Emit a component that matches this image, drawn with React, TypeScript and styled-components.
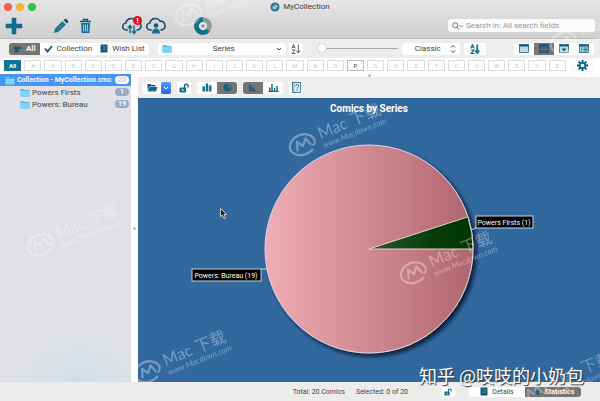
import React, { useState } from "react";
import styled, { createGlobalStyle, css } from "styled-components";

const teal = "#12708f";
const navy = "#17557a";

const GlobalStyle = createGlobalStyle`
  * { box-sizing: border-box; }
  body { margin: 0; background: #ececec; }
  body, button, input, select {
    font-family: Roboto, "Noto Sans CJK SC", sans-serif;
    font-size: 8px;
    color: #444;
  }
  button, select, input { margin: 0; padding: 0; border: 0; background: none; }
`;

const Window = styled.div`
  position: relative;
  display: flex;
  flex-direction: column;
  min-height: 100vh;
  overflow: hidden;
  background: #fff;
`;

const Header = styled.header`
  background: linear-gradient(#e6e6e6, #cfcfcf);
  border-bottom: 1px solid #bcbcbc;
`;

const TitleBar = styled.div`
  display: grid;
  grid-template-columns: 1fr auto 1fr;
  align-items: center;
  height: 13px;
  padding: 0 4px;
`;

const Lights = styled.div`
  display: flex;
  gap: 4px;
`;

const Light = styled.button<{ $color: string }>`
  width: 8px;
  height: 8px;
  border-radius: 50%;
  background: ${(p) => p.$color};
`;

const Title = styled.h1`
  display: flex;
  align-items: center;
  gap: 3px;
  margin: 0;
  font-size: 8px;
  font-weight: 400;
  color: #3c3c3c;
`;

const MainTools = styled.div`
  display: flex;
  align-items: center;
  height: 25px;
  padding: 0 5px 0 4px;
`;

const ToolGroup = styled.div`
  display: flex;
  align-items: center;
  gap: 4px;
  margin-right: 27px;
`;

const ToolButton = styled.button`
  display: grid;
  place-items: center;
  width: 20px;
  height: 22px;
`;

const SearchBox = styled.label`
  display: flex;
  align-items: center;
  gap: 3px;
  flex: 0 1 147px;
  height: 13px;
  margin-left: auto;
  padding: 0 4px;
  border-radius: 3px;
  background: #fafafa;
`;

const SearchInput = styled.input`
  flex: 1;
  min-width: 0;
  outline: none;
  &::placeholder { color: #999; opacity: 1; }
`;

const Bar = styled.div`
  display: flex;
  align-items: center;
  height: 19px;
  padding: 0 6px 0 9px;
  background: #ededed;
`;

const Segments = styled.div`
  display: flex;
  border-radius: 3px;
  overflow: hidden;
  background: #fff;
`;

const Segment = styled.button<{ $on?: boolean; $wide?: boolean }>`
  display: flex;
  align-items: center;
  justify-content: center;
  gap: 4px;
  min-width: 20px;
  height: 12px;
  padding: 0 ${(p) => (p.$wide ? "4px" : "0")};
  white-space: nowrap;
  ${(p) =>
    p.$on &&
    css`
      background: #757575;
      color: #fff;
      font-weight: 600;
    `}
`;

const Chip = styled.button`
  display: grid;
  place-items: center;
  min-width: 14px;
  height: 12px;
  border-radius: 2px;
  background: #fff;
`;

const WideChip = styled(Chip)`
  width: 22px;
`;

const Picker = styled.label`
  display: flex;
  align-items: center;
  flex: 0 1 128px;
  height: 12px;
  margin: 0 3px 0 9px;
  padding: 0 4px;
  border-radius: 3px;
  background: #fff;
`;

const StylePicker = styled(Picker)`
  flex-basis: 58px;
  margin: 0 4px;
`;

const Select = styled.select`
  flex: 1;
  min-width: 0;
  appearance: none;
  text-align: center;
  text-align-last: center;
  outline: none;
`;

const Slider = styled.input`
  flex: 0 1 80px;
  min-width: 0;
  height: 12px;
  margin-left: 15px;
  appearance: none;
  &::-webkit-slider-runnable-track { height: 1px; background: #a9a9a9; }
  &::-webkit-slider-thumb {
    appearance: none;
    width: 8px;
    height: 8px;
    margin-top: -4px;
    border-radius: 50%;
    background: #fff;
    box-shadow: 0 0 1px #777;
  }
`;

const Spacer = styled.div`
  flex: 1;
`;

const LetterBar = styled.div`
  display: flex;
  align-items: center;
  gap: 3px;
  height: 14px;
  padding: 0 7px 0 4px;
`;

const Letter = styled.button<{ $state: "on" | "has" | "empty" }>`
  flex: 1 1 0;
  height: 11px;
  border: 1px solid #dcdcdc;
  font-size: 6px;
  line-height: 9px;
  color: #c9c9c9;
  ${(p) => p.$state === "has" && css`color: #444; border-color: #bbb;`}
  ${(p) => p.$state === "on" && css`background: #0f7698; border-color: #0f7698; color: #fff; font-weight: 700;`}
`;

const Gear = styled(Chip)`
  width: 20px;
  margin-left: 4px;
  box-shadow: 0 0 1px #bbb;
`;

const Body = styled.div`
  display: flex;
  flex: 1;
  margin-top: 2px;
`;

const Sidebar = styled.nav`
  flex: 0 0 131px;
  min-width: 0;
  background: radial-gradient(ellipse 60px 40px at 60% 100%, #d0dfe9, transparent), #dfe1e5;
`;

const Handle = styled.div`
  display: grid;
  place-items: center;
  flex: 0 0 7px;
  &::after { content: ""; width: 3px; height: 3px; border-radius: 50%; background: #bbb; }
`;

const TopHandle = styled(Handle)`
  flex-basis: 3px;
`;

const List = styled.ul`
  margin: 0;
  padding: 0;
  list-style: none;
`;

const Row = styled.button<{ $root?: boolean }>`
  display: flex;
  align-items: center;
  gap: 2px;
  width: 100%;
  height: 12px;
  padding: 0 2px 0 ${(p) => (p.$root ? "5px" : "20px")};
  ${(p) =>
    p.$root &&
    css`
      background: #4a94f2;
      color: #fff;
      font-size: 7px;
      font-weight: 600;
    `}
`;

const RowLabel = styled.span`
  flex: 1;
  min-width: 0;
  white-space: nowrap;
  text-align: left;
`;

const Count = styled.span<{ $root?: boolean }>`
  flex: 0 0 14px;
  height: 8px;
  border-radius: 4px;
  font-size: 7px;
  line-height: 8px;
  font-weight: 600;
  text-align: center;
  background: ${(p) => (p.$root ? "#fff" : "#9aa9c6")};
  color: ${(p) => (p.$root ? "#b9cdea" : "#fff")};
`;

const Content = styled.main`
  display: flex;
  flex-direction: column;
  flex: 1;
  min-width: 0;
`;

const ChartTools = styled(Bar)`
  gap: 6px;
  height: 21px;
  padding: 0 5px;
`;

const Pair = styled.div`
  display: flex;
`;

const FolderChip = styled(Chip)`
  width: 18px;
`;

const MoreChip = styled(Chip)`
  min-width: 10px;
  background: linear-gradient(#5a9cf8, #1f66e8);
`;

const ChartArea = styled.section`
  flex: 1;
  display: flex;
  background: #31699f;
  border-top: 1px solid #2b6097;
`;

const ChartSvg = styled.svg`
  display: block;
  width: 100%;
  flex: 1;
  min-height: 283px;
`;

const Footer = styled.footer`
  display: flex;
  align-items: center;
  justify-content: flex-end;
  height: 19px;
  padding-right: 19px;
  background: #ececec;
  font-size: 7px;
`;

const Status = styled.span`
  margin-right: 11px;
`;

const LockChip = styled(Chip)`
  height: 10px;
  margin: 0 14px 0 22px;
`;

const Tab = styled(Segment)`
  width: 56px;
  height: 10px;
  font-size: 7px;
`;

const Overlay = styled.div`
  position: absolute;
  inset: 0;
  overflow: hidden;
  pointer-events: none;
`;

const Mark = styled.div<{ $x: number; $y: number; $alpha: number }>`
  position: absolute;
  left: ${(p) => p.$x}px;
  top: ${(p) => p.$y}px;
  display: flex;
  align-items: center;
  gap: 4px;
  color: #fff;
  opacity: ${(p) => p.$alpha};
  transform: rotate(-22deg);
  transform-origin: 15px 15px;
`;

const MarkText = styled.div`
  font-family: Lato, "Noto Sans CJK SC", sans-serif;
  font-size: 16px;
  line-height: 18px;
  white-space: nowrap;
`;

const MarkUrl = styled.div`
  font-size: 8px;
  line-height: 8px;
  font-style: italic;
`;

const Signature = styled.div`
  position: absolute;
  right: 16px;
  bottom: 13px;
  font-family: "Noto Sans CJK SC", sans-serif;
  font-size: 18px;
  line-height: 26px;
  color: #fff;
  white-space: nowrap;
  text-shadow: 1px 1px 1px #333;
`;

const Pointer = styled.svg`
  position: absolute;
  left: 220px;
  top: 208px;
`;

type IconProps = { w?: number; h?: number; color?: string };

const FolderIcon = ({ w = 10, h = 9, color = "#58bdec" }: IconProps) => (
  <svg width={w} height={h} viewBox="0 0 20 18" aria-hidden="true">
    <path d="M1 2h7l2 2h9v13H1z" fill={color} />
    <path d="M1 6h18v11H1z" fill="#7dd2f6" />
  </svg>
);

const OpenFolderIcon = () => (
  <svg width="11" height="9" viewBox="0 0 22 18" aria-hidden="true">
    <path d="M1 2h6l2 2h8v3H5l-4 7z" fill={navy} />
    <path d="M5 8h16l-3 9H1z" fill={teal} />
  </svg>
);

const LockIcon = ({ w = 10, h = 10 }: IconProps) => (
  <svg width={w} height={h} viewBox="0 0 20 20" aria-hidden="true">
    <path d="M11 10V6a3.5 3.5 0 0 1 7 0v3" fill="none" stroke={navy} strokeWidth="2.6" />
    <rect x="1" y="9" width="13" height="10" rx="1" fill={teal} />
    <path d="M7.500 12v4" stroke="#fff" strokeWidth="2" />
  </svg>
);

const PlusIcon = () => (
  <svg width="18" height="18" viewBox="0 0 18 18" aria-hidden="true">
    <path d="M7 1h4v6h6v4h-6v6H7v-6H1V7h6z" fill={teal} stroke={navy} strokeWidth=".5" />
  </svg>
);

const PencilIcon = () => (
  <svg width="16" height="16" viewBox="0 0 16 16" aria-hidden="true">
    <path d="M1 15l1.200-4.500L9.500 3.200l3.300 3.300-7.300 7.300z" fill={teal} />
    <path d="M10.500 2.200l1.400-1.200c.6-.4 1-.3 1.500.1l1.700 1.700c.4.5.4 1 0 1.500l-1.300 1.200z" fill={navy} />
    <path d="M4 12l6.500-6.500" stroke="#6fb0c6" strokeWidth=".7" />
  </svg>
);

const TrashIcon = () => (
  <svg width="13" height="16" viewBox="0 0 13 16" aria-hidden="true">
    <path d="M1 3.500h11M4.500 3V1.500h4V3" fill="none" stroke={navy} strokeWidth="1.400" />
    <path d="M2 5h9l-.7 10H2.700z" fill={teal} />
    <path d="M4.500 6.500l.2 7M6.500 6.500v7M8.500 6.500l-.2 7" stroke="#d9e4e8" strokeWidth=".8" />
  </svg>
);

const cloud = "M6 14H4.500a3.500 3.500 0 0 1-.6-7A5.500 5.500 0 0 1 14 5.200a4.500 4.500 0 0 1 2 8.700H14.500";

const CloudSyncIcon = () => (
  <svg width="20" height="20" viewBox="0 0 20 20" aria-hidden="true">
    <path d={cloud} fill="none" stroke={navy} strokeWidth="1.600" />
    <path d="M8 17V10M6 12l2-2.500 2 2.500M12 9.500v7M10 15l2 2.500 2-2.500" fill="none" stroke={teal} strokeWidth="1.500" />
    <circle cx="15.500" cy="4.500" r="4.500" fill="#e5121f" />
    <path d="M15.500 2v3.200M15.500 6v1.200" stroke="#fff" strokeWidth="1.400" />
  </svg>
);

const CloudUserIcon = () => (
  <svg width="20" height="20" viewBox="0 0 20 20" aria-hidden="true">
    <path d={cloud} fill="none" stroke={navy} strokeWidth="1.600" />
    <circle cx="10" cy="9.500" r="2.300" fill={navy} />
    <path d="M6 17.500c0-3.500 1.500-5 4-5s4 1.500 4 5z" fill={teal} />
  </svg>
);

const DiscIcon = () => (
  <svg width="18" height="18" viewBox="0 0 18 18" aria-hidden="true">
    <circle cx="9" cy="9" r="6.500" fill="none" stroke="#8e979b" strokeWidth="4.500" />
    <path d="M9 2.500a6.500 6.500 0 1 0 5 10.600" fill="none" stroke={teal} strokeWidth="4.500" />
    <circle cx="9" cy="9" r="3.600" fill="#e2e4e5" />
    <circle cx="9" cy="9" r="1.800" fill="#8e979b" />
  </svg>
);

const AppIcon = () => (
  <svg width="10" height="10" viewBox="0 0 20 20" aria-hidden="true">
    <circle cx="10" cy="10" r="9" fill="#2a7795" />
    <path d="M4 12l9-7 3 4-8 7z" fill="#7fb4c6" />
    <path d="M5 9l8 5M8 5l6 5" stroke="#e6f1f4" strokeWidth="1.500" />
  </svg>
);

const SearchIcon = () => (
  <svg width="11" height="8" viewBox="0 0 22 16" fill="none" stroke="#666" strokeWidth="1.800" aria-hidden="true">
    <circle cx="6.500" cy="6.500" r="5" />
    <path d="M10 10l4.500 5M15 6.500l3 3 3-3" />
  </svg>
);

const PointIcon = () => (
  <svg width="9" height="9" viewBox="0 0 18 18" aria-hidden="true">
    <path d="M1 7l5-4v2h8l3 2v3H8l4 2-1 5H4v-5L1 10z" fill="#27566b" />
  </svg>
);

const CheckIcon = () => (
  <svg width="9" height="9" viewBox="0 0 18 18" aria-hidden="true">
    <path d="M2 9l5 6L16 4" fill="none" stroke={navy} strokeWidth="3.600" />
  </svg>
);

const BookIcon = () => (
  <svg width="8" height="9" viewBox="0 0 16 18" aria-hidden="true">
    <rect x="1" y="1" width="14" height="16" rx="1" fill={navy} />
    <path d="M5 5h8M5 8h8M5 11h8" stroke="#6ba1b5" />
  </svg>
);

const SortIcon = ({ color = "#555", bold }: { color?: string; bold?: boolean }) => (
  <svg width="10" height="10" viewBox="0 0 20 20" fill="none" stroke={color} strokeWidth={bold ? 2.4 : 1.9} aria-hidden="true">
    <path d="M1.500 9L5 1l3.500 8M3 6.500h4M2 12h6l-6 7h7" />
    <path d="M14.500 1v16M10.500 13l4 5 4-5" strokeWidth={bold ? 3.4 : 1.9} />
  </svg>
);

const Chevron = ({ color = "#444" }: IconProps) => (
  <svg width="6" height="6" viewBox="0 0 12 12" fill="none" stroke={color} strokeWidth="2" aria-hidden="true">
    <path d="M2 4l4 4 4-4" />
  </svg>
);

const UpDown = () => (
  <svg width="6" height="10" viewBox="0 0 12 20" fill="none" stroke="#444" strokeWidth="2" aria-hidden="true">
    <path d="M2 7l4-4 4 4M2 13l4 4 4-4" />
  </svg>
);

const ViewIcon = ({ kind }: { kind: string }) => (
  <svg width="10" height="9" viewBox="0 0 20 18" aria-hidden="true">
    <rect x="1" y="1" width="18" height="16" fill={kind === "split" ? "#2a6078" : "#b9dbe4"} stroke={navy} strokeWidth="1.500" />
    <path d="M1 3h18" stroke={navy} strokeWidth="4" />
    {kind === "split" && <path d="M7 5v12M13 5v12M1 10h18" stroke="#5c7883" strokeWidth="1.500" />}
    {kind === "drop" && <path d="M5 9h10l-5 6z" fill={navy} />}
    {kind === "list" && <path d="M4 8h3M9 8h8M4 11h3M9 11h8M4 14h3M9 14h8" stroke={navy} strokeWidth="1.600" />}
  </svg>
);

const GearIcon = () => (
  <svg width="11" height="11" viewBox="0 0 22 22" aria-hidden="true">
    <path d="M11 0v22M0 11h22M3.200 3.200l15.600 15.600M18.800 3.200L3.200 18.800" stroke={navy} strokeWidth="3.800" />
    <circle cx="11" cy="11" r="7.500" fill={teal} />
    <circle cx="11" cy="11" r="3.600" fill="#fff" />
  </svg>
);

const BarsIcon = () => (
  <svg width="10" height="9" viewBox="0 0 20 18" aria-hidden="true">
    <path d="M1 7h5v10H1zM7.500 1h5v16h-5zM14 5h5v12h-5z" fill={teal} />
  </svg>
);

const PieIcon = () => (
  <svg width="9" height="9" viewBox="0 0 18 18" aria-hidden="true">
    <circle cx="9" cy="9" r="8" fill="#1d5e7b" />
    <path d="M9 9V1a8 8 0 0 1 8 8z" fill="#3f7b90" />
  </svg>
);

const SlopeIcon = () => (
  <svg width="10" height="9" viewBox="0 0 20 18" aria-hidden="true">
    <path d="M2 1l16 16H2z" fill="#1d5e7b" />
    <path d="M6 7v10M10 11v6M14 14v3" stroke="#52717d" />
  </svg>
);

const HistogramIcon = () => (
  <svg width="11" height="9" viewBox="0 0 22 18" aria-hidden="true">
    <path d="M1 17h20M3.500 17V9M8 17V2M13 17V10M18 17V6" stroke={teal} strokeWidth="3" />
  </svg>
);

const HelpIcon = () => (
  <svg width="9" height="11" viewBox="0 0 18 22" fill="none" stroke={navy} aria-hidden="true">
    <rect x="1" y="1" width="16" height="20" fill="#e4f0f3" strokeWidth="1.500" />
    <path d="M4 1v20" />
    <path d="M7.500 8c0-4 6-4 6 0 0 2.500-3 2-3 5M10.500 15v2.500" strokeWidth="2" />
  </svg>
);

const StatsIcon = () => (
  <svg width="9" height="8" viewBox="0 0 18 16" aria-hidden="true">
    <path d="M1 8l13-7v14z" fill="#1b6580" />
  </svg>
);

const LogoMark = () => (
  <svg width="30" height="24" viewBox="0 0 30 24" fill="none" stroke="#fff" aria-hidden="true">
    <path d="M23 20.500A13 10 0 1 1 28 12c0 3-2 5-4 5" strokeWidth="2.200" />
    <path d="M8 17l3-9 4 6 5-6 3 8" strokeWidth="2.200" strokeLinejoin="round" />
  </svg>
);

const Watermark = ({ x, y, alpha }: { x: number; y: number; alpha: number }) => (
  <Mark $x={x - 15} $y={y - 15} $alpha={alpha} aria-hidden="true">
    <LogoMark />
    <MarkText>
      Mac 下载
      <MarkUrl>www.Macdown.com</MarkUrl>
    </MarkText>
  </Mark>
);

const watermarks = [
  { x: 189, y: 16, alpha: 0.3 },
  { x: 303, y: 146, alpha: 0.34 },
  { x: 414, y: 274, alpha: 0.34 },
  { x: 148, y: 373, alpha: 0.34 },
  { x: 41, y: 246, alpha: 0.3 },
  { x: 564, y: 44, alpha: 0.3 },
  { x: 534, y: 394, alpha: 0.28 },
];

const series = [
  { name: "Powers Firsts", count: 1 },
  { name: "Powers: Bureau", count: 19 },
];

const letters = ["All", "#", ..."ABCDEFGHIJKLMNOPQRSTUVWXYZ"];

const PieChart = () => {
  const cx = 231;
  const cy = 150;
  const r = 104;
  const angle = (2 * Math.PI * series[0].count) / (series[0].count + series[1].count);
  const ex = cx + r * Math.cos(angle);
  const ey = cy - r * Math.sin(angle);
  return (
    <ChartSvg viewBox="0 0 462 283" role="img" aria-label="Comics by Series">
      <defs>
        <linearGradient id="pink">
          <stop offset="0" stopColor="#efadb5" />
          <stop offset="1" stopColor="#b0656f" />
        </linearGradient>
        <linearGradient id="green">
          <stop offset="0" stopColor="#315331" />
          <stop offset=".6" stopColor="#073d0b" />
          <stop offset="1" stopColor="#003504" />
        </linearGradient>
        <filter id="shade" x="-10%" y="-10%" width="125%" height="125%">
          <feDropShadow dx="3" dy="3" stdDeviation="2" floodColor="#001020" floodOpacity=".85" />
        </filter>
      </defs>
      <text x={cx} y="13" textAnchor="middle" fontSize="10" fontWeight="700" fill="#fff">
        Comics by Series
      </text>
      <circle cx={cx} cy={cy} r={r} fill="url(#pink)" stroke="#e3d3e8" filter="url(#shade)" />
      <path d={`M${cx} ${cy}H${cx + r}A${r} ${r} 0 0 0 ${ex} ${ey}Z`} fill="url(#green)" stroke="#e6d9c0" />
      <path d="M123 170h6M333 131l5-2" stroke="#c6d3e0" />
      <g stroke="#c6d3e0" fill="#000">
        <rect x="54" y="170" width="69" height="12" />
        <rect x="338" y="117" width="57" height="12" />
      </g>
      <g fontSize="7" fill="#fff" textAnchor="middle">
        <text x="88" y="179">Powers: Bureau (19)</text>
        <text x="366" y="126">Powers Firsts (1)</text>
      </g>
    </ChartSvg>
  );
};

export default function App() {
  const [query, setQuery] = useState("");
  const [size, setSize] = useState(0);
  return (
    <Window>
      <GlobalStyle />
      <Header>
        <TitleBar>
          <Lights>
            <Light $color="#ee5f58" aria-label="Close" />
            <Light $color="#f5b62e" aria-label="Minimize" />
            <Light $color="#35c148" aria-label="Zoom" />
          </Lights>
          <Title><AppIcon />MyCollection</Title>
        </TitleBar>
        <MainTools>
          <ToolGroup><ToolButton aria-label="Add"><PlusIcon /></ToolButton></ToolGroup>
          <ToolGroup>
            <ToolButton aria-label="Edit"><PencilIcon /></ToolButton>
            <ToolButton aria-label="Remove"><TrashIcon /></ToolButton>
          </ToolGroup>
          <ToolGroup>
            <ToolButton aria-label="Sync"><CloudSyncIcon /></ToolButton>
            <ToolButton aria-label="Account"><CloudUserIcon /></ToolButton>
          </ToolGroup>
          <ToolButton aria-label="Core"><DiscIcon /></ToolButton>
          <SearchBox>
            <SearchIcon />
            <SearchInput
              aria-label="Search"
              placeholder="Search in: All search fields"
              value={query}
              onChange={(e) => setQuery(e.target.value)}
            />
          </SearchBox>
        </MainTools>
      </Header>

      <Bar>
        <Segments>
          <Segment $on $wide aria-pressed="true"><PointIcon />All</Segment>
          <Segment $wide><CheckIcon />Collection</Segment>
          <Segment $wide><BookIcon />Wish List</Segment>
        </Segments>
        <Picker>
          <FolderIcon />
          <Select aria-label="Group by"><option>Series</option></Select>
          <Chevron />
        </Picker>
        <Chip aria-label="Sort groups"><SortIcon /></Chip>
        <Slider
          type="range"
          aria-label="Thumbnail size"
          value={size}
          onChange={(e) => setSize(Number(e.target.value))}
        />
        <StylePicker>
          <Select aria-label="Layout style"><option>Classic</option></Select>
          <UpDown />
        </StylePicker>
        <WideChip aria-label="Sort order"><SortIcon color={teal} bold /></WideChip>
        <Spacer />
        <Segments>
          <Segment aria-label="Plain view"><ViewIcon kind="plain" /></Segment>
          <Segment $on aria-label="Split view"><ViewIcon kind="split" /></Segment>
          <Segment aria-label="Drop view"><ViewIcon kind="drop" /></Segment>
          <Segment aria-label="List view"><ViewIcon kind="list" /></Segment>
        </Segments>
      </Bar>

      <LetterBar>
        {letters.map((l) => (
          <Letter key={l} $state={l === "All" ? "on" : l === "P" ? "has" : "empty"}>{l}</Letter>
        ))}
        <Gear aria-label="Settings"><GearIcon /></Gear>
      </LetterBar>

      <Body>
        <Sidebar>
          <List>
            <li>
              <Row $root>
                <FolderIcon />
                <RowLabel>Collection - MyCollection.cmc</RowLabel>
                <Count $root>20</Count>
              </Row>
            </li>
            {series.map((s) => (
              <li key={s.name}>
                <Row>
                  <FolderIcon />
                  <RowLabel>{s.name}</RowLabel>
                  <Count>{s.count}</Count>
                </Row>
              </li>
            ))}
          </List>
        </Sidebar>
        <Handle />
        <Content>
          <TopHandle />
          <ChartTools>
            <Pair>
              <FolderChip aria-label="Open"><OpenFolderIcon /></FolderChip>
              <MoreChip aria-label="More"><Chevron color="#fff" /></MoreChip>
            </Pair>
            <Chip aria-label="Lock"><LockIcon /></Chip>
            <Segments>
              <Segment aria-label="Bar chart"><BarsIcon /></Segment>
              <Segment $on aria-label="Pie chart"><PieIcon /></Segment>
            </Segments>
            <Segments>
              <Segment $on aria-label="Sort by size"><SlopeIcon /></Segment>
              <Segment aria-label="Sort by name"><HistogramIcon /></Segment>
            </Segments>
            <Chip aria-label="Help"><HelpIcon /></Chip>
          </ChartTools>
          <ChartArea><PieChart /></ChartArea>
        </Content>
      </Body>

      <Footer>
        <Status>Total: 20 Comics</Status>
        <Status>Selected: 0 of 20</Status>
        <LockChip aria-label="Lock panel"><LockIcon w={8} h={8} /></LockChip>
        <Segments>
          <Tab><BookIcon />Details</Tab>
          <Tab $on><StatsIcon />Statistics</Tab>
        </Segments>
      </Footer>

      <Overlay>
        {watermarks.map((w) => <Watermark key={`${w.x}-${w.y}`} {...w} />)}
        <Signature>知乎 @吱吱的小奶包</Signature>
        <Pointer width="7" height="11" viewBox="0 0 14 22" aria-hidden="true">
          <path d="M1 1v16l4-3 3 7 3-1-3-7h5z" fill="#111" stroke="#fff" strokeWidth="1.500" />
        </Pointer>
      </Overlay>
    </Window>
  );
}
